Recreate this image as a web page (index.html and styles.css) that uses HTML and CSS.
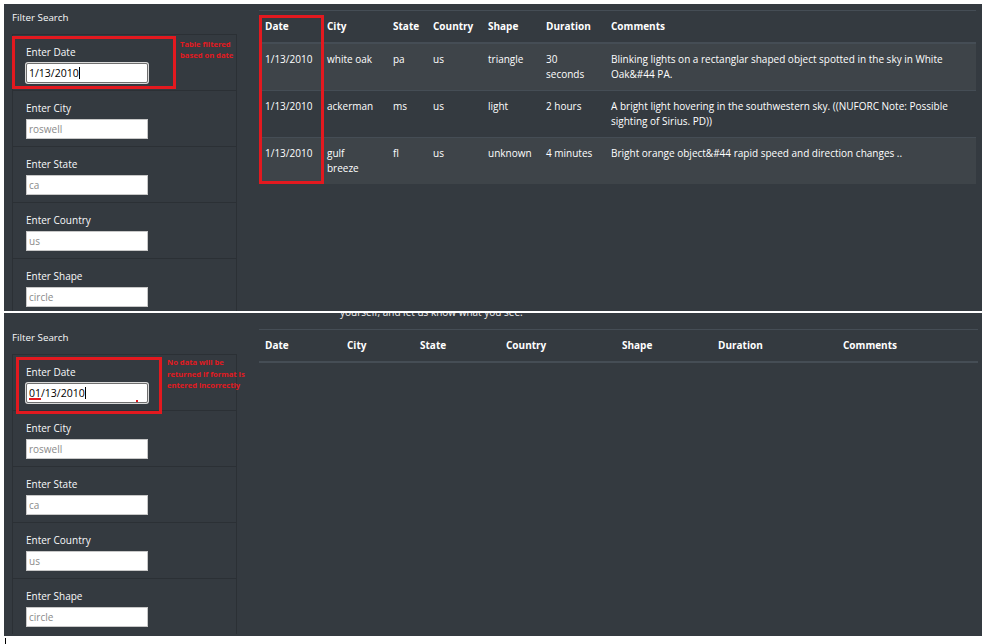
FILE: index.html
```html
<!DOCTYPE html>
<html lang="en">
<head>
<meta charset="utf-8">
<title>UFO Sightings – Filter Search</title>
<link rel="stylesheet" href="styles.css">
</head>
<body>
<div class="screens">

  <section class="shot shot--top">
    <aside class="sidebar">
      <h5 class="filter-title">Filter Search</h5>
      <ul class="filters">
        <li class="filter"><label>Enter Date</label><div class="field field--active">1/13/2010<span class="caret"></span></div></li>
        <li class="filter"><label>Enter City</label><input class="field" placeholder="roswell"></li>
        <li class="filter"><label>Enter State</label><input class="field" placeholder="ca"></li>
        <li class="filter"><label>Enter Country</label><input class="field" placeholder="us"></li>
        <li class="filter"><label>Enter Shape</label><input class="field" placeholder="circle"></li>
      </ul>
    </aside>
    <main class="results">
      <table class="ufo">
        <colgroup>
          <col class="c-date"><col class="c-city"><col class="c-state"><col class="c-country"><col class="c-shape"><col class="c-duration"><col>
        </colgroup>
        <thead>
          <tr><th>Date</th><th>City</th><th>State</th><th>Country</th><th>Shape</th><th>Duration</th><th>Comments</th></tr>
        </thead>
        <tbody>
          <tr><td>1/13/2010</td><td>white oak</td><td>pa</td><td>us</td><td>triangle</td><td>30 seconds</td><td>Blinking lights on a rectanglar shaped object spotted in the sky in White Oak&amp;#44 PA.</td></tr>
          <tr><td>1/13/2010</td><td>ackerman</td><td>ms</td><td>us</td><td>light</td><td>2 hours</td><td>A bright light hovering in the southwestern sky. ((NUFORC Note: Possible sighting of Sirius. PD))</td></tr>
          <tr><td>1/13/2010</td><td>gulf breeze</td><td>fl</td><td>us</td><td>unknown</td><td>4 minutes</td><td>Bright orange object&amp;#44 rapid speed and direction changes ..</td></tr>
        </tbody>
      </table>
    </main>
    <div class="annot-box annot-box--date-top"></div>
    <p class="annot-note annot-note--top">Table filtered based on date</p>
    <div class="annot-box annot-box--column"></div>
  </section>

  <section class="shot shot--bottom">
    <aside class="sidebar">
      <h5 class="filter-title">Filter Search</h5>
      <ul class="filters">
        <li class="filter"><label>Enter Date</label><div class="field field--active"><span class="typo">01</span>/13/2010<span class="caret"></span></div></li>
        <li class="filter"><label>Enter City</label><input class="field" placeholder="roswell"></li>
        <li class="filter"><label>Enter State</label><input class="field" placeholder="ca"></li>
        <li class="filter"><label>Enter Country</label><input class="field" placeholder="us"></li>
        <li class="filter"><label>Enter Shape</label><input class="field" placeholder="circle"></li>
      </ul>
    </aside>
    <main class="results">
      <p class="intro">yourself, and let us know what you see.</p>
      <table class="ufo ufo--empty">
        <colgroup>
          <col class="e-date"><col class="e-city"><col class="e-state"><col class="e-country"><col class="e-shape"><col class="e-duration"><col>
        </colgroup>
        <thead>
          <tr><th>Date</th><th>City</th><th>State</th><th>Country</th><th>Shape</th><th>Duration</th><th>Comments</th></tr>
        </thead>
        <tbody></tbody>
      </table>
    </main>
    <div class="annot-box annot-box--date-bottom"></div>
    <p class="annot-note annot-note--bottom">No data will be returned if format is entered incorrectly</p>
    <span class="annot-dot"></span>
  </section>

  <div class="cursor-mark"></div>
</div>
</body>
</html>
```

FILE: styles.css
```css
* { box-sizing: border-box; }

body {
  margin: 0;
  background: #ffffff;
  font-family: "Open Sans", "Noto Sans", sans-serif;
  font-size: 10px;
  color: #ffffff;
}

.screens {
  padding: 4px 6px 0 4px;
  display: flex;
  flex-direction: column;
  gap: 2px;
}

.shot {
  position: relative;
  background: #343a40;
  overflow: hidden;
  display: flex;
  align-items: flex-start;
  gap: 22px;
  padding: 0 6px 0 8px;
}
.shot--top { height: 307px; }
.shot--bottom { height: 323px; padding-right: 4px; }

/* sidebar */
.sidebar {
  width: 225px;
  flex: none;
  padding-top: 6px;
}
.shot--bottom .sidebar { padding-top: 17px; }

.filter-title {
  margin: 0 0 9px;
  font-size: 9.8px;
  font-weight: 400;
  line-height: 15px;
  color: #f8f9fa;
}

.filters {
  list-style: none;
  margin: 0;
  padding: 0;
}
.filter {
  padding: 9px 13px 7px;
  border: 1px solid rgba(0, 0, 0, 0.16);
  border-bottom: none;
}
.filter label {
  display: block;
  line-height: 16px;
  margin-bottom: 3px;
  font-size: 10px;
  color: #f8f9fa;
}

.field {
  display: block;
  width: 122px;
  height: 20px;
  margin: 0;
  padding: 0 2px;
  border: 1px solid #c8c8c8;
  background: #ffffff;
  font-family: "Open Sans", "Noto Sans", sans-serif;
  font-size: 10px;
  line-height: 18px;
  color: #222;
  outline: none;
}
.field::placeholder { color: #8a8a8a; }

.field--active {
  border: 1px solid #6f6f6f;
  border-radius: 2px;
  box-shadow: 0 0 0 1px #d9d9d9;
  font-size: 10.5px;
  color: #000;
  white-space: nowrap;
}
.caret {
  display: inline-block;
  width: 1px;
  height: 12px;
  background: #000;
  vertical-align: -2px;
}
.typo {
  text-decoration: underline solid #e3191f;
  text-decoration-thickness: 2px;
  text-underline-offset: 1px;
}

/* table */
.results {
  flex: 1;
  min-width: 0;
  padding-top: 6px;
}
.shot--bottom .results { padding-top: 0; }

.intro {
  margin: -8px 0 9px 81px;
  line-height: 15px;
  font-size: 10px;
  color: #f0f0f0;
}

.ufo {
  width: 100%;
  border-collapse: collapse;
  table-layout: fixed;
}
.ufo th,
.ufo td {
  padding: 8px 6px 8px;
  line-height: 15px;
  text-align: left;
  vertical-align: top;
  border-top: 1px solid #454d55;
  color: #ffffff;
}
.ufo th { font-weight: 700; }
.ufo thead th { border-bottom: 2px solid #454d55; }
.ufo tbody tr:nth-child(odd) { background: rgba(255, 255, 255, 0.05); }
.ufo td:nth-child(2) { padding-right: 10px; }
.ufo td:nth-child(6) { padding-right: 9px; }

.c-date { width: 62px; }
.c-city { width: 66px; }
.c-state { width: 40px; }
.c-country { width: 55px; }
.c-shape { width: 58px; }
.c-duration { width: 65px; }

.e-date { width: 82px; }
.e-city { width: 73px; }
.e-state { width: 86px; }
.e-country { width: 116px; }
.e-shape { width: 96px; }
.e-duration { width: 125px; }

/* annotations drawn over the screenshots */
.annot-box {
  position: absolute;
  border: 3px solid #e3191f;
}
.annot-box--date-top { left: 8px; top: 32px; width: 164px; height: 53px; }
.annot-box--column { left: 255px; top: 11px; width: 65px; height: 169px; }
.annot-box--date-bottom { left: 12px; top: 44px; width: 146px; height: 57px; }

.annot-note {
  position: absolute;
  margin: 0;
  font-size: 7.6px;
  font-weight: 700;
  line-height: 11px;
  color: #e3191f;
}
.annot-note--top { left: 176px; top: 35px; width: 60px; }
.annot-note--bottom { left: 163px; top: 44px; width: 80px; line-height: 11.5px; }

.annot-dot {
  position: absolute;
  left: 132px;
  top: 87px;
  width: 2px;
  height: 2px;
  background: #e3191f;
}

.cursor-mark {
  width: 1px;
  height: 8px;
  margin: 0 0 0 1px;
  background: #000;
}
```
